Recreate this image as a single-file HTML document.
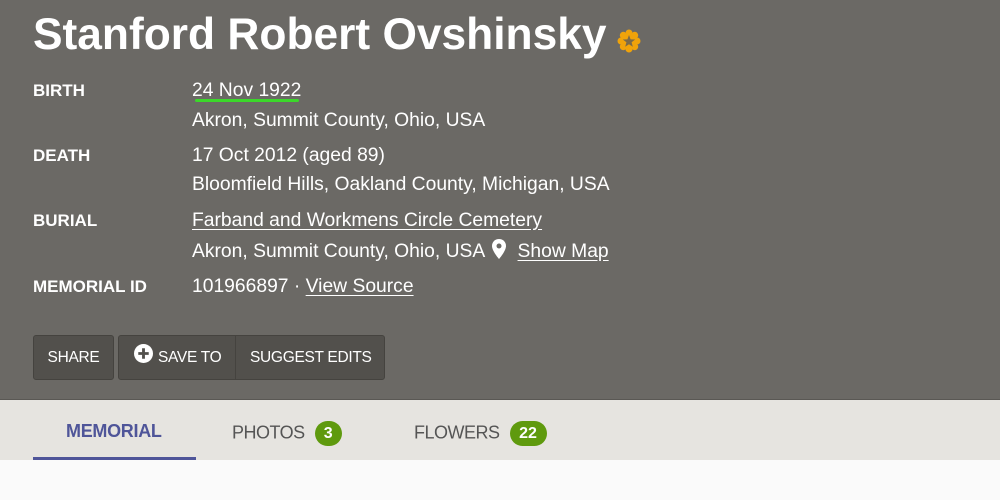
<!DOCTYPE html>
<html><head><meta charset="utf-8"><style>
*{margin:0;padding:0;box-sizing:border-box}
body{width:1000px;height:500px;overflow:hidden;background:#fafafa;font-family:"Liberation Sans",sans-serif;}
.hdr{position:absolute;left:0;top:0;width:1000px;height:400px;background:#6b6965;color:#fff;}
.hdr .bl{position:absolute;left:0;top:399px;width:1000px;height:1px;background:#5a5854}
h1{position:absolute;left:33px;top:10px;font-size:44.3px;font-weight:bold;letter-spacing:0;white-space:nowrap}
.lab{position:absolute;left:33px;font-size:17px;font-weight:bold;letter-spacing:0}
.val{position:absolute;left:192px;font-size:19.3px;letter-spacing:0;white-space:nowrap}
u{text-decoration:underline;text-underline-offset:3px}
.btn{position:absolute;top:335px;height:45px;background:#52504c;border:1px solid #45433f;border-radius:3px;color:#fff;font-size:15.5px;line-height:43px;letter-spacing:-0.3px}
.tabs{position:absolute;left:0;top:400px;width:1000px;height:60px;background:#e6e4e0}
.tab{position:absolute;top:21px;font-size:18px;color:#555;letter-spacing:-0.5px}
.badge{display:inline-block;background:#5f9a0e;color:#fff;font-weight:bold;border-radius:13px;height:25px;line-height:25px;text-align:center;font-size:16px;vertical-align:middle;margin-left:10px;position:relative;top:0px;letter-spacing:0}
</style></head><body>
<div class="hdr">
<h1>Stanford Robert Ovshinsky</h1>
<svg style="position:absolute;left:617px;top:29px" width="24" height="24" viewBox="0 0 24 24"><g fill="#f0a30a"><circle cx="12" cy="12" r="9"/><circle cx="12" cy="4" r="3.5"/><circle cx="12" cy="20" r="3.5"/><circle cx="4" cy="12" r="3.5"/><circle cx="20" cy="12" r="3.5"/><circle cx="6.3" cy="6.3" r="3.5"/><circle cx="17.7" cy="6.3" r="3.5"/><circle cx="6.3" cy="17.7" r="3.5"/><circle cx="17.7" cy="17.7" r="3.5"/></g><polygon points="12,6 13.6,10.4 18.2,10.5 14.6,13.3 15.8,17.8 12,15.2 8.2,17.8 9.4,13.3 5.8,10.5 10.4,10.4" fill="#7a6a4a"/></svg>
<div class="lab" style="top:81px">BIRTH</div>
<div class="val" style="top:80px">24 Nov 1922</div>
<div style="position:absolute;left:195px;top:99px;width:104px;height:3px;background:#3bd82a;border-radius:2px"></div>
<div class="val" style="top:110px">Akron, Summit County, Ohio, USA</div>
<div class="lab" style="top:146px">DEATH</div>
<div class="val" style="top:145px">17 Oct 2012 (aged 89)</div>
<div class="val" style="top:174px">Bloomfield Hills, Oakland County, Michigan, USA</div>
<div class="lab" style="top:211px">BURIAL</div>
<div class="val" style="top:210px"><u>Farband and Workmens Circle Cemetery</u></div>
<div class="val" style="top:239px">Akron, Summit County, Ohio, USA <svg width="14" height="20" viewBox="0 0 14 20" style="vertical-align:-2px;margin:0 12px 0 2px"><path d="M7 0C3 0 0 3 0 7c0 5 7 13 7 13s7-8 7-13C14 3 11 0 7 0z" fill="#fff"/><circle cx="7" cy="7" r="2.5" fill="#6b6965"/></svg><u>Show Map</u></div>
<div class="lab" style="top:277px">MEMORIAL ID</div>
<div class="val" style="top:276px">101966897 · <u>View Source</u></div>
<div class="btn" style="left:33px;width:81px;text-align:center">SHARE</div>
<div class="btn" style="left:118px;width:267px"></div>
<div style="position:absolute;left:235px;top:336px;width:1px;height:43px;background:#45433f"></div>
<div style="position:absolute;left:134px;top:335px;height:45px;line-height:45px;color:#fff;font-size:15.5px;letter-spacing:-0.3px"><svg width="19" height="19" viewBox="0 0 20 20" style="vertical-align:-1px;margin-top:-8px;margin-right:5px"><circle cx="10" cy="10" r="10" fill="#fff"/><path d="M10 4.5v11M4.5 10h11" stroke="#52504c" stroke-width="3"/></svg>SAVE TO</div>
<div style="position:absolute;left:250px;top:335px;height:45px;line-height:45px;color:#fff;font-size:15.5px;letter-spacing:-0.3px">SUGGEST EDITS</div>
<div class="bl"></div>
</div>
<div class="tabs">
<div class="tab" style="left:66px;color:#4f5599;font-weight:bold;letter-spacing:-0.3px">MEMORIAL</div>
<div style="position:absolute;left:33px;top:57px;width:163px;height:3px;background:#4f5599"></div>
<div class="tab" style="left:232px">PHOTOS<span class="badge" style="width:27px">3</span></div>
<div class="tab" style="left:414px">FLOWERS<span class="badge" style="width:37px">22</span></div>
</div>
</body></html>
